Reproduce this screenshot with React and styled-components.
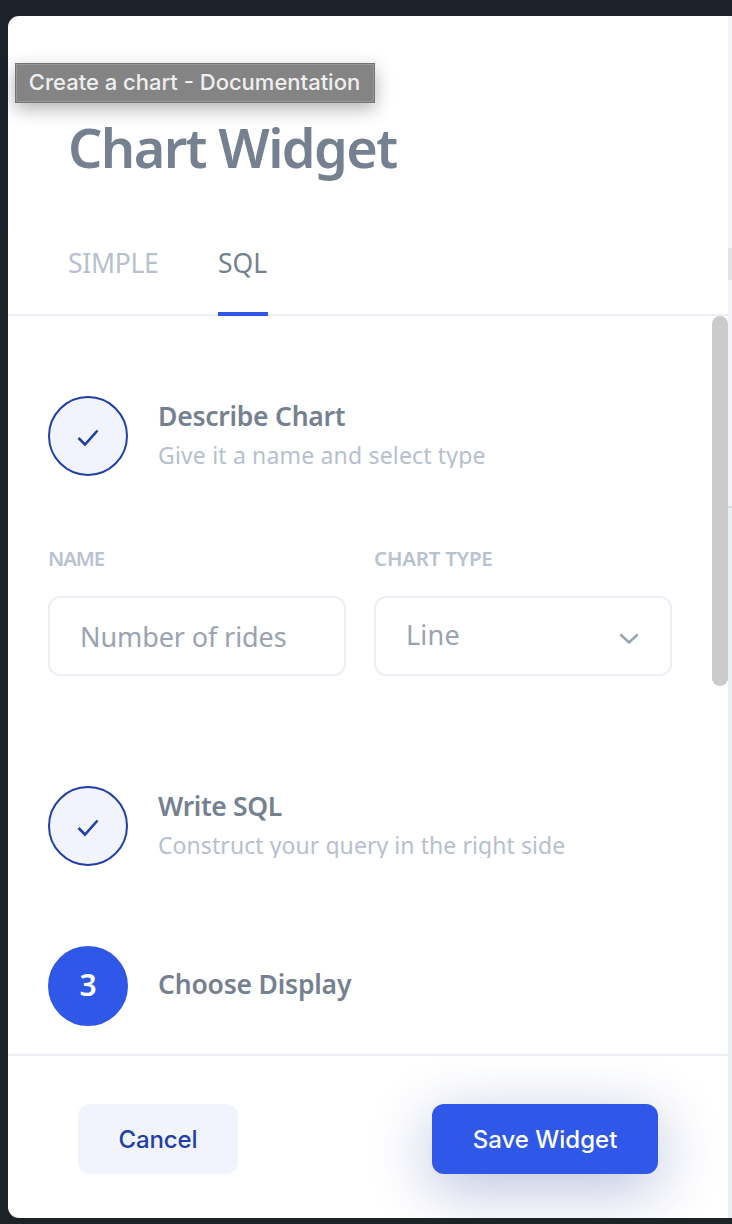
import React from "react";
import styled, { createGlobalStyle } from "styled-components";

const GlobalStyle = createGlobalStyle`
  * { box-sizing: border-box; }
  html, body { margin: 0; padding: 0; }
  body {
    background: #1d212a;
    font-family: "Noto Sans", "Open Sans", sans-serif;
    overflow: hidden;
  }
  button, input { font: inherit; }
`;

const Screen = styled.div`
  height: 1224px;
  padding: 16px 0 6px 8px;
  display: flex;
  background: linear-gradient(#1d212a, #1c2326);
`;

const Panel = styled.section`
  position: relative;
  width: 720px;
  display: flex;
  flex-direction: column;
  background: #fff;
  border-radius: 11px 0 0 11px;
`;

const Backdrop = styled.div`
  flex: 1;
  display: flex;
  flex-direction: column;
  background: linear-gradient(#f2f3f9 0 490px, #ebeef3 490px);
`;

const BackdropHeader = styled.div`
  margin-top: 232px;
  height: 32px;
  background: #e2e2e7;
`;

const BackdropRule = styled.div`
  margin-top: 226px;
  height: 2px;
  background: #d9dee5;
`;

const Header = styled.header`
  height: 300px;
  padding: 93px 60px 0;
  border-bottom: 2px solid #ebeff5;
  display: flex;
  flex-direction: column;
  justify-content: space-between;
`;

const Title = styled.h1`
  margin: 0;
  font-size: 54px;
  line-height: 76px;
  font-weight: 600;
  letter-spacing: -1.6px;
  color: #758190;
  white-space: nowrap;
`;

const Tabs = styled.nav`
  display: flex;
  gap: 60px;
  margin-bottom: -2px;
`;

const Tab = styled.button`
  width: ${(p) => p.$width}px;
  height: 72px;
  padding: 0 0 30px;
  border: 0;
  border-bottom: 4px solid ${(p) => (p.$active ? "#2f57e8" : "transparent")};
  background: none;
  color: ${(p) => (p.$active ? "#758190" : "#b7c0ce")};
  font-size: 26.5px;
  line-height: 38px;
  letter-spacing: ${(p) => p.$tracking}px;
  text-align: left;
  white-space: nowrap;
`;

const Content = styled.main`
  height: 738px;
  display: flex;
  justify-content: space-between;
  overflow: hidden;
`;

const Steps = styled.div`
  width: 664px;
  padding: 80px 0 0 40px;
`;

const ScrollThumb = styled.div`
  width: 16px;
  height: 370px;
  border-radius: 8px;
  background: #cbcbcb;
`;

const Step = styled.div`
  display: flex;
  align-items: center;
  gap: 30px;
  height: 80px;
  margin-bottom: ${(p) => p.$after || 0}px;
`;

const Badge = styled.div`
  width: 80px;
  height: 80px;
  padding-bottom: ${(p) => (p.$done ? 0 : 3)}px;
  border-radius: 50%;
  display: flex;
  align-items: center;
  justify-content: center;
  border: 2px solid ${(p) => (p.$done ? "#223fa6" : "#2f57e8")};
  background: ${(p) => (p.$done ? "#f1f4fd" : "#2f57e8")};
  color: #fff;
  font-size: 30px;
  font-weight: 600;
`;

const StepText = styled.div`
  display: flex;
  flex-direction: column;
`;

const StepTitle = styled.h2`
  margin: 0;
  padding-bottom: ${(p) => p.$lift || 0}px;
  font-size: 26.5px;
  line-height: 38px;
  font-weight: 600;
  letter-spacing: ${(p) => p.$tracking}px;
  color: #758190;
  white-space: nowrap;
`;

const StepHint = styled.p`
  margin: 7px 0 7px;
  height: 26px;
  overflow: hidden;
  font-size: 23px;
  line-height: 27px;
  letter-spacing: ${(p) => p.$tracking}px;
  color: #b7c0ce;
  white-space: nowrap;
`;

const Fields = styled.div`
  display: flex;
  gap: 28px;
  margin-bottom: 110px;
`;

const Field = styled.label`
  width: 298px;
  display: flex;
  flex-direction: column;
`;

const FieldLabel = styled.span`
  height: 50px;
  font-size: 20.5px;
  line-height: 25px;
  font-weight: 600;
  letter-spacing: ${(p) => p.$tracking}px;
  color: #b9c2d1;
  white-space: nowrap;
`;

const Control = styled.span`
  height: 80px;
  padding: 0 30px;
  display: flex;
  align-items: center;
  justify-content: space-between;
  border: 2px solid #ebeff6;
  border-radius: 12px;
  color: #99a3b1;
`;

const Value = styled.span`
  font-size: 27px;
  line-height: 40px;
  letter-spacing: ${(p) => p.$tracking}px;
  margin-top: ${(p) => p.$drop || 0}px;
  margin-bottom: ${(p) => p.$lift || 0}px;
  white-space: nowrap;
`;

const Footer = styled.footer`
  height: 164px;
  padding: 48px 70px 0;
  border-top: 2px solid #ebeff5;
  display: flex;
  align-items: flex-start;
  justify-content: space-between;
  overflow: hidden;
  border-radius: 0 0 0 11px;
`;

const Button = styled.button`
  width: ${(p) => (p.$primary ? 226 : 160)}px;
  height: 70px;
  padding: 0;
  border: 0;
  border-radius: 12px;
  font-family: Inter, sans-serif;
  font-size: 24px;
  font-weight: 500;
  letter-spacing: ${(p) => (p.$primary ? 0 : -0.1)}px;
  background: ${(p) => (p.$primary ? "#2f57e8" : "#f1f4fc")};
  color: ${(p) => (p.$primary ? "#fff" : "#223fa6")};
  box-shadow: ${(p) => (p.$primary ? "0 14px 60px rgba(34, 56, 150, 0.32)" : "none")};
`;

const Tooltip = styled.div`
  position: absolute;
  left: 7px;
  top: 47px;
  width: 360px;
  height: 40px;
  padding: 0 1px 2px 0;
  display: flex;
  align-items: center;
  justify-content: center;
  border: 1px solid #737373;
  background: #848484;
  box-shadow: inset 0 0 0 1px #999, 0 6px 18px rgba(0, 0, 0, 0.3);
  color: #efefef;
  font-family: Inter, sans-serif;
  font-size: 22px;
  font-weight: 500;
  letter-spacing: 0;
  white-space: nowrap;
`;

const CheckIcon = () => (
  <svg width="24" height="24" viewBox="0 0 24 24" fill="none">
    <path d="M2.5 14 L9 20.5 L21.5 6.5" stroke="#223fa6" strokeWidth="2.6" />
  </svg>
);

const ChevronIcon = () => (
  <svg width="22" height="16" viewBox="0 0 22 16" fill="none">
    <path d="M3 7 L11 14.5 L19 7" stroke="#99a3b1" strokeWidth="2.4" strokeLinecap="round" strokeLinejoin="round" />
  </svg>
);

export default function App() {
  return (
    <>
      <GlobalStyle />
      <Screen>
        <Panel>
          <Header>
            <Title>Chart Widget</Title>
            <Tabs>
              <Tab $width={90} $tracking={-0.3}>SIMPLE</Tab>
              <Tab $width={50} $tracking={0} $active>SQL</Tab>
            </Tabs>
          </Header>
          <Content>
            <Steps>
              <Step $after={70}>
                <Badge $done><CheckIcon /></Badge>
                <StepText>
                  <StepTitle $tracking={-0.25}>Describe Chart</StepTitle>
                  <StepHint $tracking={0.17}>Give it a name and select type</StepHint>
                </StepText>
              </Step>
              <Fields>
                <Field>
                  <FieldLabel $tracking={-1.1}>NAME</FieldLabel>
                  <Control><Value $tracking={-0.1} $drop={2}>Number of rides</Value></Control>
                </Field>
                <Field>
                  <FieldLabel $tracking={-0.2}>CHART TYPE</FieldLabel>
                  <Control><Value $tracking={0.2} $lift={2}>Line</Value><ChevronIcon /></Control>
                </Field>
              </Fields>
              <Step $after={80}>
                <Badge $done><CheckIcon /></Badge>
                <StepText>
                  <StepTitle $tracking={-0.35}>Write SQL</StepTitle>
                  <StepHint $tracking={0.07}>Construct your query in the right side</StepHint>
                </StepText>
              </Step>
              <Step>
                <Badge>3</Badge>
                <StepTitle $tracking={-0.2} $lift={4}>Choose Display</StepTitle>
              </Step>
            </Steps>
            <ScrollThumb />
          </Content>
          <Footer>
            <Button>Cancel</Button>
            <Button $primary>Save Widget</Button>
          </Footer>
          <Tooltip>Create a chart - Documentation</Tooltip>
        </Panel>
        <Backdrop>
          <BackdropHeader />
          <BackdropRule />
        </Backdrop>
      </Screen>
    </>
  );
}
